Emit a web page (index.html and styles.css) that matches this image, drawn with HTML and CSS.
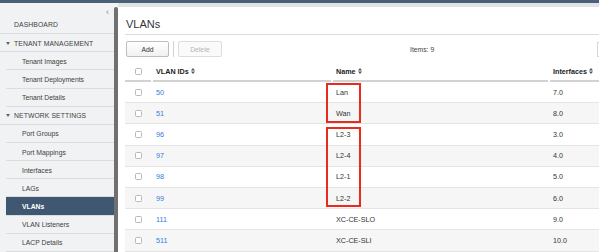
FILE: index.html
```html
<!DOCTYPE html>
<html lang="en">
<head>
    <meta charset="UTF-8">
    <meta name="viewport" content="width=device-width, initial-scale=1.0">
    <title>VLANs</title>
    <link rel="stylesheet" href="styles.css">
</head>
<body>
    <div class="topbar"></div>

    <div class="layout">
        <!-- left navigation -->
        <nav class="sidebar">
            <div class="collapse">&lsaquo;</div>
            <div class="nav-item">DASHBOARD</div>
            <div class="nav-item"><svg class="caret" width="4" height="3" viewBox="0 0 4 3"><polygon points="0,0 4,0 2,3" fill="#666"/></svg>TENANT MANAGEMENT</div>
            <div class="nav-sub">Tenant Images</div>
            <div class="nav-sub">Tenant Deployments</div>
            <div class="nav-sub">Tenant Details</div>
            <div class="nav-item"><svg class="caret" width="4" height="3" viewBox="0 0 4 3"><polygon points="0,0 4,0 2,3" fill="#666"/></svg>NETWORK SETTINGS</div>
            <div class="nav-sub">Port Groups</div>
            <div class="nav-sub">Port Mappings</div>
            <div class="nav-sub">Interfaces</div>
            <div class="nav-sub">LAGs</div>
            <div class="nav-sub active">VLANs</div>
            <div class="nav-sub">VLAN Listeners</div>
            <div class="nav-sub">LACP Details</div>
        </nav>

        <div class="splitter"></div>

        <div class="main">
            <div class="panel">
                <h1 class="page-title">VLANs</h1>

                <div class="toolbar">
                    <button class="btn">Add</button>
                    <span class="btn-sep"></span>
                    <button class="btn" disabled>Delete</button>
                    <span class="items-count">Items: 9</span>
                    <span class="pager"></span>
                </div>

                <div class="grid">
                    <div class="th"><span class="check"></span></div>
                    <div class="th">VLAN IDs <svg class="sort" width="4" height="6" viewBox="0 0 4 6"><polygon points="0,2.4 4,2.4 2,0" fill="#555"/><polygon points="0,3.6 4,3.6 2,6" fill="#555"/></svg></div>
                    <div class="th">Name <svg class="sort" width="4" height="6" viewBox="0 0 4 6"><polygon points="0,2.4 4,2.4 2,0" fill="#555"/><polygon points="0,3.6 4,3.6 2,6" fill="#555"/></svg></div>
                    <div class="th">Interfaces <svg class="sort" width="4" height="6" viewBox="0 0 4 6"><polygon points="0,2.4 4,2.4 2,0" fill="#555"/><polygon points="0,3.6 4,3.6 2,6" fill="#555"/></svg></div>
                </div>

                <div id="rows"></div>

                <!-- highlight boxes drawn over the Name column -->
                <div class="mark mark-a"></div>
                <div class="mark mark-b"></div>
            </div>
        </div>
    </div>

    <script>
        const vlans = [
            ["50", "Lan", "7.0"],
            ["51", "Wan", "8.0"],
            ["96", "L2-3", "3.0"],
            ["97", "L2-4", "4.0"],
            ["98", "L2-1", "5.0"],
            ["99", "L2-2", "6.0"],
            ["111", "XC-CE-SLO", "9.0"],
            ["511", "XC-CE-SLI", "10.0"]
        ];

        const rows = document.getElementById("rows");
        vlans.forEach(function (v) {
            const row = document.createElement("div");
            row.className = "grid row";
            row.innerHTML =
                '<div class="td"><span class="check"></span></div>' +
                '<div class="td"><a class="vlan-link">' + v[0] + '</a></div>' +
                '<div class="td">' + v[1] + '</div>' +
                '<div class="td">' + v[2] + '</div>';
            rows.appendChild(row);
        });
    </script>
</body>
</html>
```

FILE: styles.css
```css
body {
    margin: 0;
    width: 599px;
    height: 252px;
    overflow: hidden;
    font-family: 'Liberation Sans', Arial, sans-serif;
    color: #333;
    background-color: #f1f2f3;
}
.topbar {
    height: 3px;
    background-color: #4b5f78;
}
.layout {
    display: flex;
    height: 249px;
}

/* sidebar */
.sidebar {
    width: 114px;
    flex-shrink: 0;
    background-color: #f1f2f3;
}
.collapse {
    height: 12.9px;
    box-sizing: border-box;
    padding: 6px 5px 0 0;
    line-height: 7px;
    text-align: right;
    font-size: 9px;
    color: #8a8a8a;
}
.nav-item,
.nav-sub {
    height: 18.17px;
    box-sizing: border-box;
    border-bottom: 1px solid #dcdddf;
    display: flex;
    align-items: center;
    padding-top: 1px;
    font-size: 6.8px;
    color: #404040;
    white-space: nowrap;
}
.nav-item {
    padding-left: 14px;
    letter-spacing: 0.1px;
}
.nav-item .caret {
    margin-left: -8px;
    margin-right: 4px;
}
.nav-sub {
    margin-left: 6px;
    padding-left: 16px;
}
.nav-sub.active {
    background-color: #3f5771;
    color: #fff;
    font-weight: bold;
}
.splitter {
    width: 4px;
    flex-shrink: 0;
    margin-top: 4px;
    background-color: #707070;
    border-radius: 2px 2px 0 0;
}

/* main panel */
.main {
    flex: 1;
    padding-top: 4px;
    background-color: #e0e3e6;
    overflow: hidden;
}
.panel {
    position: relative;
    height: 100%;
    background-color: #fff;
    padding-left: 7px;
    overflow: hidden;
}
.page-title {
    margin: 0;
    padding: 10px 0 3px 1px;
    font-size: 11px;
    line-height: 14px;
    font-weight: normal;
    color: #333;
    border-bottom: 1.5px solid #dcdcdc;
}
.toolbar {
    display: flex;
    align-items: center;
    width: 502px;
    height: 16px;
    margin: 6px 0 0 1px;
}
.btn {
    height: 16px;
    width: 43px;
    padding: 0;
    font-family: inherit;
    font-size: 6.8px;
    color: #333;
    background: linear-gradient(#fff, #f1f1f1);
    border: 1px solid #bdbdbd;
    border-radius: 2px;
}
.btn:disabled {
    width: 44px;
    color: #b5b5b5;
    border-color: #dddddd;
    background: #fafafa;
}
.btn-sep {
    width: 1px;
    height: 16px;
    margin: 0 4px;
    background-color: #d2d2d2;
}
.items-count {
    margin-left: 188px;
    font-size: 6.8px;
    color: #444;
}
.pager {
    margin-left: auto;
    width: 30px;
    height: 13px;
    border: 1px solid #d5d5d5;
    border-right: none;
}

/* table */
.grid {
    display: grid;
    grid-template-columns: 28px 180px 217px 100px;
    margin-top: 5px;
}
.th {
    height: 20px;
    box-sizing: border-box;
    padding: 0 0 2px 3px;
    display: flex;
    align-items: center;
    font-size: 7.2px;
    font-weight: bold;
    color: #222;
    background: linear-gradient(#d2d2d2, #d2d2d2) left bottom / calc(100% - 2px) 2px no-repeat;
}
.th:first-child,
.row .td:first-child {
    justify-content: center;
    padding: 0 2px 0 0;
}
.th:first-child {
    padding-bottom: 2px;
}
.sort {
    margin-left: 2px;
}
.row {
    margin-top: 0;
    height: 21.2px;
    box-sizing: border-box;
    border-bottom: 1px solid #e4e4e4;
}
.row:nth-child(even) {
    background-color: #f6f6f6;
}
.td {
    display: flex;
    align-items: center;
    padding-left: 3px;
    font-size: 7.2px;
    color: #333;
}
.check {
    width: 7px;
    height: 7px;
    box-sizing: border-box;
    border: 1px solid #b8b8b8;
    border-radius: 1.5px;
    background-color: #fff;
}
.vlan-link {
    color: #2f7be0;
}

/* red highlight boxes */
.mark {
    position: absolute;
    left: 208px;
    width: 35px;
    box-sizing: border-box;
    border: 2.7px solid #ea2a1c;
}
.mark-a {
    top: 76px;
    height: 40px;
}
.mark-b {
    top: 120px;
    height: 80px;
}
```
